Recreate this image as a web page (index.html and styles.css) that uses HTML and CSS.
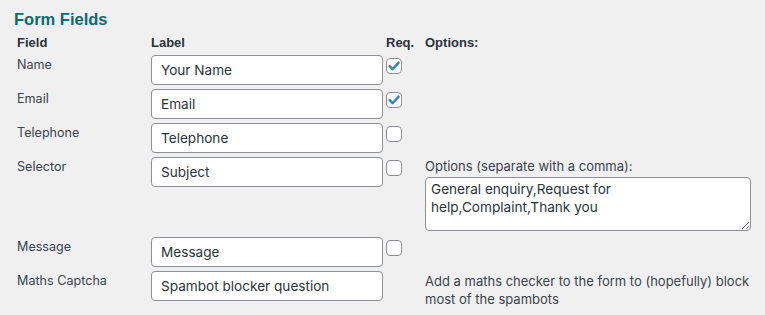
FILE: index.html
```html
<!DOCTYPE html>
<html lang="en">
<head>
<meta charset="utf-8">
<title>Form Fields</title>
<link rel="stylesheet" href="styles.css">
</head>
<body>
<div class="page">
  <h2 class="title">Form Fields</h2>
  <div class="grid">
    <div class="th">Field</div>
    <div class="th">Label</div>
    <div class="th">Req.</div>
    <div class="th">Options:</div>

    <div class="field">Name</div>
    <div><input class="text" type="text" value="Your Name"></div>
    <div><span class="cb"><svg viewBox="0 0 16 16" width="16" height="16"><path d="M3.6 8.2 L6.6 11.2 L12.6 4.6" fill="none" stroke="#3582c4" stroke-width="2.4" stroke-linecap="round" stroke-linejoin="round"/></svg></span></div>
    <div></div>

    <div class="field">Email</div>
    <div><input class="text" type="text" value="Email"></div>
    <div><span class="cb"><svg viewBox="0 0 16 16" width="16" height="16"><path d="M3.6 8.2 L6.6 11.2 L12.6 4.6" fill="none" stroke="#3582c4" stroke-width="2.4" stroke-linecap="round" stroke-linejoin="round"/></svg></span></div>
    <div></div>

    <div class="field">Telephone</div>
    <div><input class="text" type="text" value="Telephone"></div>
    <div><span class="cb"></span></div>
    <div></div>

    <div class="field">Selector</div>
    <div><input class="text" type="text" value="Subject"></div>
    <div><span class="cb"></span></div>
    <div class="opts">
      <div class="opt-label">Options (separate with a comma):</div>
      <textarea class="area">General enquiry,Request for help,Complaint,Thank you</textarea>
    </div>

    <div class="field">Message</div>
    <div><input class="text" type="text" value="Message"></div>
    <div><span class="cb"></span></div>
    <div></div>

    <div class="field">Maths Captcha</div>
    <div><input class="text" type="text" value="Spambot blocker question"></div>
    <div></div>
    <div class="desc">Add a maths checker to the form to (hopefully) block most of the spambots</div>
  </div>
</div>
</body>
</html>
```
FILE: styles.css
```css
html, body {
  margin: 0;
  padding: 0;
  background: #f0f0f1;
}
body {
  font-family: Inter, "Liberation Sans", Arial, sans-serif;
  font-size: 13px;
  color: #3c434a;
}
.page {
  padding: 8px 0 0 14px;
}
.title {
  margin: 0 0 4px 0;
  font-family: "Liberation Sans", Arial, sans-serif;
  font-size: 16.5px;
  line-height: 22px;
  font-weight: 700;
  color: #0b6a70;
}
.grid {
  display: grid;
  grid-template-columns: 134px 235px 39px 330px;
  row-gap: 4px;
  padding-left: 3px;
  align-items: start;
}
.th {
  font-family: "Liberation Sans", Arial, sans-serif;
  font-weight: 700;
  line-height: 17px;
  color: #2c3338;
}
.field {
  line-height: 18px;
  padding-top: 1px;
  font-size: 12.6px;
}
.text {
  display: block;
  box-sizing: border-box;
  width: 232px;
  height: 30px;
  margin: 0;
  padding: 0 9px;
  border: 1px solid #8c8f94;
  border-radius: 4px;
  background: #fff;
  font-family: Inter, "Liberation Sans", Arial, sans-serif;
  font-size: 13.6px;
  color: #2c3338;
  outline: none;
}
.cb {
  display: block;
  box-sizing: border-box;
  width: 16px;
  height: 16px;
  margin-top: 3px;
  border: 1px solid #8c8f94;
  border-radius: 4px;
  background: #fff;
  position: relative;
}
.cb svg {
  position: absolute;
  left: -1px;
  top: -1px;
}
.opts {
  display: flex;
  flex-direction: column;
}
.opt-label {
  line-height: 17px;
  margin-top: 1px;
}
.area {
  box-sizing: border-box;
  width: 326px;
  height: 54px;
  margin: 2px 0 2px 0;
  padding: 2px 5px;
  border: 1px solid #8c8f94;
  border-radius: 4px;
  background: #fff;
  font-family: Inter, "Liberation Sans", Arial, sans-serif;
  font-size: 13.6px;
  line-height: 18px;
  color: #2c3338;
  resize: both;
  outline: none;
}
.desc {
  line-height: 18px;
  margin-top: 1px;
}
```
